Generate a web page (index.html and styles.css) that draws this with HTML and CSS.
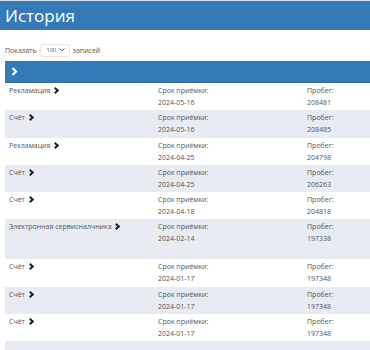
FILE: index.html
```html
<!DOCTYPE html>
<html lang="ru">
<head>
    <meta charset="UTF-8">
    <meta name="viewport" content="width=device-width, initial-scale=1.0">
    <title>История</title>
    <link rel="stylesheet" href="styles.css">
</head>
<body>
    <div class="page-header">
        <h1>История</h1>
    </div>

    <div class="length">
        <span>Показать</span>
        <div class="select">
            <span>100</span>
            <svg width="6" height="4" viewBox="0 0 6 4"><path d="M0.5 0.5 L3 3 L5.5 0.5" fill="none" stroke="#666" stroke-width="1"/></svg>
        </div>
        <span>записей</span>
    </div>

    <div class="table">
        <div class="table-head">
            <svg width="7" height="9" viewBox="0 0 7 9"><path d="M1.5 1 L5 4.5 L1.5 8" fill="none" stroke="#fff" stroke-width="2.2"/></svg>
        </div>

        <div class="row">
            <div class="cell">Рекламация <span class="chev"></span></div>
            <div class="cell">Срок приёмки:<br>2024-05-16</div>
            <div class="cell">Пробег:<br>208481</div>
        </div>
        <div class="row odd">
            <div class="cell">Счёт <span class="chev"></span></div>
            <div class="cell">Срок приёмки:<br>2024-05-16</div>
            <div class="cell">Пробег:<br>208485</div>
        </div>
        <div class="row">
            <div class="cell">Рекламация <span class="chev"></span></div>
            <div class="cell">Срок приёмки:<br>2024-04-25</div>
            <div class="cell">Пробег:<br>204798</div>
        </div>
        <div class="row odd">
            <div class="cell">Счёт <span class="chev"></span></div>
            <div class="cell">Срок приёмки:<br>2024-04-25</div>
            <div class="cell">Пробег:<br>206263</div>
        </div>
        <div class="row">
            <div class="cell">Счёт <span class="chev"></span></div>
            <div class="cell">Срок приёмки:<br>2024-04-18</div>
            <div class="cell">Пробег:<br>204818</div>
        </div>
        <div class="row odd tall">
            <div class="cell">Электронная сервисналчника <span class="chev"></span></div>
            <div class="cell">Срок приёмки:<br>2024-02-14</div>
            <div class="cell">Пробег:<br>197338</div>
        </div>
        <div class="row">
            <div class="cell">Счёт <span class="chev"></span></div>
            <div class="cell">Срок приёмки:<br>2024-01-17</div>
            <div class="cell">Пробег:<br>197348</div>
        </div>
        <div class="row odd">
            <div class="cell">Счёт <span class="chev"></span></div>
            <div class="cell">Срок приёмки:<br>2024-01-17</div>
            <div class="cell">Пробег:<br>197348</div>
        </div>
        <div class="row">
            <div class="cell">Счёт <span class="chev"></span></div>
            <div class="cell">Срок приёмки:<br>2024-01-17</div>
            <div class="cell">Пробег:<br>197348</div>
        </div>
        <div class="row odd"></div>
    </div>
</body>
</html>
```

FILE: styles.css
```css
body {
    font-family: "Open Sans", Arial, sans-serif;
    font-size: 7px;
    color: #555;
    background-color: white;
    margin: 0;
    overflow: hidden;
}

.page-header {
    background-color: #337ab7;
    border-top: 1px solid #d8dde6;
    height: 29px;
    padding-left: 5px;
    display: flex;
    align-items: center;
}

h1 {
    margin: 0;
    color: white;
    font-size: 17px;
    font-weight: normal;
}

.length {
    display: flex;
    align-items: center;
    gap: 3px;
    height: 14px;
    margin: 13px 0 0 5px;
}

.select {
    width: 30px;
    height: 13px;
    box-sizing: border-box;
    border: 1px solid #e6e6e6;
    border-radius: 3px;
    display: flex;
    align-items: center;
    justify-content: space-between;
    padding: 0 4px 0 6px;
    font-size: 5.5px;
}

.table {
    margin: 4px 0 0 5px;
    width: 365px;
}

.table-head {
    background-color: #337ab7;
    height: 22px;
    padding-left: 6px;
    display: flex;
    align-items: center;
    border-bottom: 1px solid #2d6da3;
    box-sizing: border-box;
}

.row {
    display: grid;
    grid-template-columns: 149px 149px 1fr;
    height: 27.3px;
    padding-top: 2px;
    box-sizing: border-box;
    line-height: 12px;
}

.row.odd {
    background-color: #e8ebf2;
}

.row.tall {
    height: 40px;
}

.cell {
    padding-left: 4px;
    white-space: nowrap;
}

.chev {
    display: inline-block;
    width: 3px;
    height: 3px;
    border-right: 2px solid #222;
    border-top: 2px solid #222;
    transform: rotate(45deg);
    margin-left: 1px;
    vertical-align: 0px;
}
```
